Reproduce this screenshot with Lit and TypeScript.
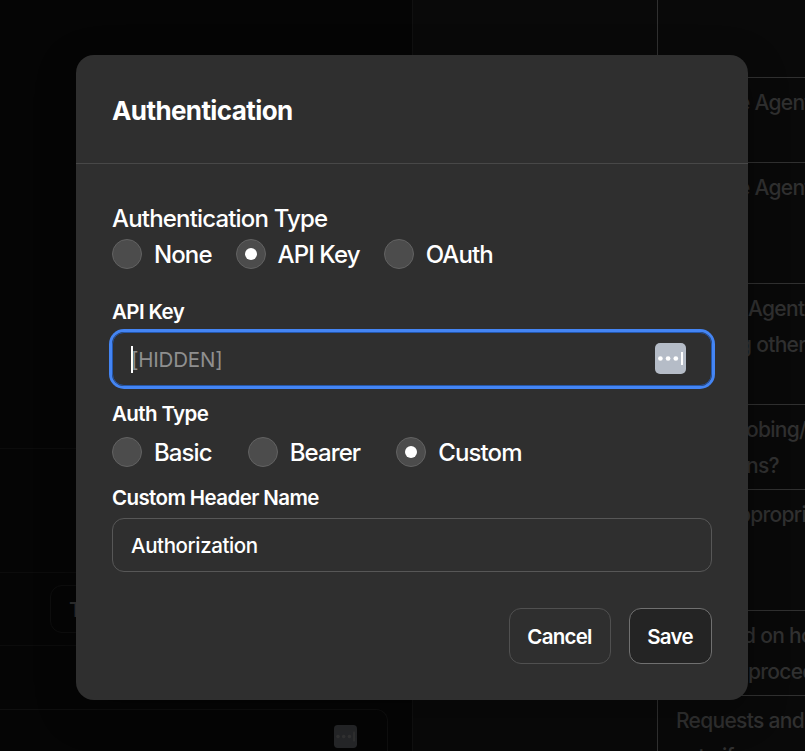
import { LitElement, html, css, svg } from "lit";
import { customElement, property } from "lit/decorators.js";

@customElement("key-badge")
class KeyBadge extends LitElement {
  static styles = css`
    :host { display: block; width: 31px; height: 31px; }
    svg { display: block; width: 100%; height: 100%; }
  `;
  render() {
    return html`<svg viewBox="0 0 31 31">
      <rect width="31" height="31" rx="5" fill="#b5bcc7" />
      ${[5.4, 13.1, 20.8].map((x) => svg`<circle cx=${x} cy="15.5" r="2.35" fill="#fff" />`)}
      <rect x="26" y="9" width="2" height="13" fill="#fff" />
    </svg>`;
  }
}

@customElement("radio-option")
class RadioOption extends LitElement {
  @property() label = "";
  @property({ type: Boolean }) checked = false;
  static styles = css`
    :host { display: flex; align-items: center; gap: 12px; height: 30px; }
    .disc {
      box-sizing: border-box; width: 30px; height: 30px; border-radius: 50%;
      background: #4c4c4c; border: 1px solid #626262;
      display: grid; place-items: center; flex: none;
    }
    .dot { width: 12px; height: 12px; border-radius: 50%; background: #fff; }
    .label {
      white-space: nowrap; font-size: 24px; line-height: 30px; letter-spacing: -0.9px;
      font-weight: 450; padding-top: 2px;
    }
  `;
  render() {
    return html`<span class="disc">${this.checked ? html`<span class="dot"></span>` : ""}</span>
      <span class="label">${this.label}</span>`;
  }
}

@customElement("app-root")
class AppRoot extends LitElement {
  static styles = css`
    :host {
      display: block; position: relative; width: 805px; height: 751px; overflow: hidden;
      background: #050505; color: #fff;
      font-family: Inter, "Liberation Sans", sans-serif;
    }
    * { box-sizing: border-box; }
    .page { display: grid; grid-template-columns: 412px 1fr; height: 751px; overflow: hidden; }
    .left { display: flex; flex-direction: column; }
    .upper { flex: 0 0 449px; border-bottom: 1px solid #0c0c0c; }
    .middle { flex: 0 0 124px; border-bottom: 1px solid #0c0c0c; }
    .test { flex: 0 0 73px; padding: 12px 0 0 50px; border-bottom: 1px solid #0c0c0c; }
    .testbtn {
      width: 76px; height: 48px; border: 1px solid #0e0e0e; border-radius: 12px;
      padding-left: 18px; font-size: 20.5px; font-weight: 500; line-height: 47px; color: #303030;
    }
    .field {
      margin-top: 63px; width: 388px; height: 54px; flex: none; border: 1px solid #0f0f0f; border-left: 0;
      border-radius: 0 12px 12px 0; display: flex; justify-content: flex-end; padding: 15px 30px 0 0;
    }
    .field key-badge { width: 23px; height: 23px; opacity: 0.18; }
    .right { background: #090909; border-left: 1px solid #101010; padding-left: 244px; }
    .table { border-left: 1px solid #303030; width: 400px; height: 751px; }
    .row {
      border-bottom: 1px solid #303030; padding: 7px 0 0 18px; font-size: 21px; line-height: 36px;
      color: #303030; white-space: nowrap; font-weight: 450; letter-spacing: -0.7px;
    }
    .head { height: 78px; }
    .short { height: 85px; }
    .tall { height: 121px; }
    .line { display: block; height: 36px; }
    .shift { padding-left: var(--shift); }

    .modal {
      position: absolute; left: 76px; top: 55px; width: 672px; height: 645px; border-radius: 18px;
      background: #2f2f2f; box-shadow: 0 12px 40px rgba(0, 0, 0, 0.3);
      display: flex; flex-direction: column;
    }
    .title {
      height: 109px; flex: none; border-bottom: 1px solid #484848; padding: 2px 36px 0; display: flex;
      align-items: center; font-size: 26px; font-weight: 650; letter-spacing: -0.6px;
    }
    .body { flex: 1; padding: 37px 36px 36px; display: flex; flex-direction: column; }
    .heading { font-size: 24px; line-height: 36px; letter-spacing: -0.83px; font-weight: 450; }
    .group { display: flex; }
    .types { gap: 24px; margin-top: 2px; }
    .auths { gap: 36px; margin-top: 8px; }
    .label { font-size: 20.5px; line-height: 30px; font-weight: 620; letter-spacing: -0.6px; }
    .l1 { margin-top: 28px; }
    .l2 { margin-top: 13px; }
    .l3 { margin-top: 16px; }
    .input {
      height: 54px; border: 1px solid #575757; border-radius: 12px; display: flex; align-items: center;
      padding: 0 25px 0 18px; font-size: 20.5px; letter-spacing: -0.4px; font-weight: 450;
    }
    .focus {
      margin-top: 5px; border-color: #2457ac; box-shadow: 0 0 0 3px #4485f4; justify-content: space-between;
    }
    .focus key-badge { margin-bottom: 2px; }
    .ph { color: #8f8f8f; display: flex; align-items: center; font-weight: 400; letter-spacing: -0.2px; }
    .caret { width: 2px; height: 27px; background: #fff; margin-right: -2px; }
    .l3 + .input { margin-top: 5px; }
    .actions { display: flex; justify-content: flex-end; gap: 18px; margin-top: 36px; }
    .btn {
      height: 56px; border: 1px solid #505050; border-radius: 12px; display: grid; place-items: center;
      font-size: 20.5px; font-weight: 620; letter-spacing: -0.75px; padding: 1px 1px 0 0;
    }
    .cancel { width: 102px; }
    .save { width: 83px; background: #242424; border-color: #707070; }
  `;
  render() {
    const row = (size: string, ...lines: [number, string][]) => html`<div class="row ${size}">
      ${lines.map(([x, t]) => html`<span class="line shift" style="--shift:${x}px">${t}</span>`)}
    </div>`;
    return html`
      <div class="page">
        <div class="left">
          <div class="upper"></div><div class="middle"></div>
          <div class="test"><div class="testbtn">Test</div></div>
          <div class="field"><key-badge></key-badge></div>
        </div>
        <div class="right"><div class="table">
          ${row("head")}
          ${row("short", [62, "e Agent"])}
          ${row("tall", [62, "e Agent"])}
          ${row("tall", [72, "Agent"], [63, "g other"])}
          ${row("short", [70, "obing/"], [70, "ns?"])}
          ${row("tall", [62, "ppropri"])}
          ${row("short", [67, "d on ho"], [72, "proced"])}
          ${row("tall", [0, "Requests and"], [0, "set gifs"])}
        </div></div>
      </div>
      <section class="modal">
        <div class="title">Authentication</div>
        <div class="body">
          <div class="heading">Authentication Type</div>
          <div class="group types">
            <radio-option label="None"></radio-option>
            <radio-option label="API Key" checked></radio-option>
            <radio-option label="OAuth"></radio-option>
          </div>
          <div class="label l1">API Key</div>
          <div class="input focus"><span class="ph"><span class="caret"></span>[HIDDEN]</span><key-badge></key-badge></div>
          <div class="label l2">Auth Type</div>
          <div class="group auths">
            <radio-option label="Basic"></radio-option>
            <radio-option label="Bearer"></radio-option>
            <radio-option label="Custom" checked></radio-option>
          </div>
          <div class="label l3">Custom Header Name</div>
          <div class="input">Authorization</div>
          <div class="actions"><div class="btn cancel">Cancel</div><div class="btn save">Save</div></div>
        </div>
      </section>
    `;
  }
}
